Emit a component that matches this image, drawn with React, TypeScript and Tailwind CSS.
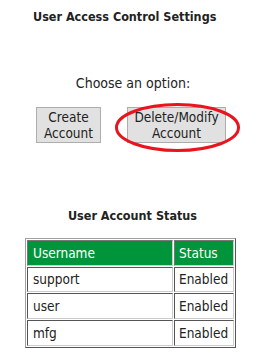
const users = [
  { name: "support", status: "Enabled" },
  { name: "user", status: "Enabled" },
  { name: "mfg", status: "Enabled" },
];

export default function App() {
  return (
    <div className="h-[363px] w-[264px] bg-white text-[13px] text-[#222] [font-family:'DejaVu_Sans_Condensed','DejaVu_Sans',sans-serif]">
      <h1 className="pl-[33px] pt-[9px] text-[12.5px] leading-[16px] font-bold">User Access Control Settings</h1>

      <p className="mt-[50px] pl-[2px] text-center text-[14px] leading-[16px]">Choose an option:</p>

      <div className="relative mt-[16px] flex h-[36px] items-stretch gap-[26px] pl-[36px] text-[13.5px]">
        <button className="w-[65px] border border-[#adadad] bg-[#e1e1e1] leading-[16px]">
          Create
          <br />
          Account
        </button>
        <button className="w-[99px] border border-[#adadad] bg-[#e1e1e1] leading-[16px]">
          Delete/Modify
          <br />
          Account
        </button>
        <svg className="pointer-events-none absolute left-[113px] top-[-4px]" width="130" height="52" viewBox="0 0 130 52">
          <ellipse cx="64.5" cy="24.5" rx="61" ry="23" fill="none" stroke="#e8141e" strokeWidth="3" />
        </svg>
      </div>

      <h2 className="mt-[65px] pl-[1px] text-center text-[12.5px] font-bold leading-[16px]">User Account Status</h2>

      <table className="ml-[25px] mt-[14px] w-[211px] border-separate border-spacing-[1px] border border-t-[#a0a0a0] border-l-[#a0a0a0] border-b-[#555] border-r-[#555] text-[13.5px]">
        <thead>
          <tr>
            <th className="h-[25.7px] border border-t-[#777] border-l-[#777] border-b-[#ccc] border-r-[#ccc] bg-[#00953a] px-[5px] text-left font-normal text-white">
              Username
            </th>
            <th className="w-[60px] border border-t-[#777] border-l-[#777] border-b-[#ccc] border-r-[#ccc] bg-[#00953a] px-[4px] text-left font-normal text-white">
              Status
            </th>
          </tr>
        </thead>
        <tbody>
          {users.map((u) => (
            <tr key={u.name}>
              <td className="h-[25.7px] border border-t-[#555] border-l-[#555] border-b-[#ccc] border-r-[#ccc] px-[5px]">{u.name}</td>
              <td className="border border-t-[#555] border-l-[#555] border-b-[#ccc] border-r-[#ccc] px-[4px]">{u.status}</td>
            </tr>
          ))}
        </tbody>
      </table>
    </div>
  );
}
